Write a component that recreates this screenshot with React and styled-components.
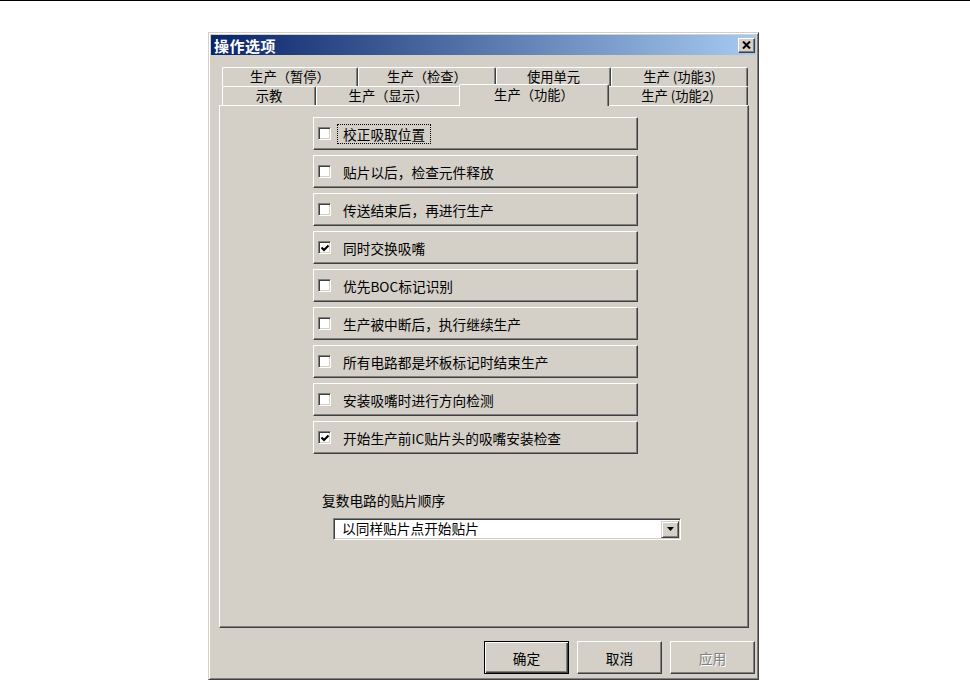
import styled, { createGlobalStyle } from 'styled-components';

const options = [
	{ label: '校正吸取位置', checked: false, focused: true },
	{ label: '贴片以后，检查元件释放', checked: false },
	{ label: '传送结束后，再进行生产', checked: false },
	{ label: '同时交换吸嘴', checked: true },
	{ label: '优先BOC标记识别', checked: false },
	{ label: '生产被中断后，执行继续生产', checked: false },
	{ label: '所有电路都是坏板标记时结束生产', checked: false },
	{ label: '安装吸嘴时进行方向检测', checked: false },
	{ label: '开始生产前IC贴片头的吸嘴安装检查', checked: true },
];

const backTabs = [
	{ label: '生产（暂停）', width: 136 },
	{ label: '生产（检查）', width: 138 },
	{ label: '使用单元', width: 115 },
	{ label: '生产 (功能3)', width: 137 },
];

const frontTabs = [
	{ label: '示教', width: 94 },
	{ label: '生产（显示）', width: 145 },
	{ label: '生产（功能）', width: 146, active: true },
	{ label: '生产 (功能2)', width: 141 },
];

const App = () => {
	return (
		<>
			<GlobalStyle />
			<TopRule />
			<Dialog>
				<TitleBar>
					<Title>操作选项</Title>
					<CloseButton>
						<svg width="9" height="8" viewBox="0 0 9 8">
							<path d="M1 0.5 L8 7.5 M8 0.5 L1 7.5" stroke="#000" strokeWidth="2" />
						</svg>
					</CloseButton>
				</TitleBar>

				<Content>
					<TabStrip>
						<TabRow>
							{backTabs.map((tab) => (
								<Tab key={tab.label} $width={tab.width}>
									{tab.label}
								</Tab>
							))}
						</TabRow>
						<TabRow>
							{frontTabs.map((tab) => (
								<Tab key={tab.label} $width={tab.width} $active={tab.active}>
									{tab.label}
								</Tab>
							))}
						</TabRow>
					</TabStrip>

					<Panel>
						<OptionList>
							{options.map((item) => (
								<OptionButton key={item.label}>
									<CheckBox>
										{item.checked && (
											<svg width="8" height="8" viewBox="0 0 8 8">
												<path d="M0.5 3.5 L3 6 L7.5 1.5" fill="none" stroke="#000" strokeWidth="2" />
											</svg>
										)}
									</CheckBox>
									<OptionLabel $focused={item.focused}>{item.label}</OptionLabel>
								</OptionButton>
							))}
						</OptionList>

						<OrderGroup>
							<GroupLabel>复数电路的贴片顺序</GroupLabel>
							<Select>
								<span>以同样贴片点开始贴片</span>
								<DropButton>
									<svg width="7" height="4" viewBox="0 0 7 4">
										<path d="M0 0 H7 L3.5 4 Z" fill="#000" />
									</svg>
								</DropButton>
							</Select>
						</OrderGroup>
					</Panel>
				</Content>

				<ButtonRow>
					<PushButton $default>确定</PushButton>
					<PushButton>取消</PushButton>
					<PushButton disabled>应用</PushButton>
				</ButtonRow>
			</Dialog>
		</>
	);
};

const GlobalStyle = createGlobalStyle`
	html, body {
		margin: 0;
		padding: 0;
		background: #ffffff;
	}

	body {
		font-family: "Noto Sans CJK SC", "Noto Sans", sans-serif;
		font-size: 13.5px;
		color: #000000;
	}
`;

const TopRule = styled.div`
	height: 1px;
	background: #000000;
`;

const Dialog = styled.div`
	box-sizing: border-box;
	width: 551px;
	height: 648px;
	margin: 31px 0 0 208px;
	padding: 2px;
	display: flex;
	flex-direction: column;
	background: #d4d0c8;
	border: 1px solid;
	border-color: #d4d0c8 #404040 #404040 #d4d0c8;
	box-shadow: inset 1px 1px #ffffff, inset -1px -1px #808080;
`;

const TitleBar = styled.div`
	height: 20px;
	flex: none;
	display: flex;
	align-items: center;
	justify-content: space-between;
	padding: 0 1px 0 3px;
	background: linear-gradient(to right, #0a246a, #a6caf0);
`;

const Title = styled.span`
	color: #ffffff;
	font-weight: 700;
	font-size: 15px;
	line-height: 1;
	letter-spacing: 0.5px;
`;

const CloseButton = styled.div`
	box-sizing: border-box;
	width: 17px;
	height: 15px;
	display: flex;
	align-items: center;
	justify-content: center;
	background: #d4d0c8;
	border: 1px solid;
	border-color: #ffffff #404040 #404040 #ffffff;
	box-shadow: inset -1px -1px #808080;
`;

const Content = styled.div`
	padding: 12px 7px 0 8px;
	display: flex;
	flex-direction: column;
`;

const TabStrip = styled.div`
	display: flex;
	flex-direction: column;
	padding: 0 1px 0 3px;
`;

const TabRow = styled.div`
	display: flex;
	height: 19px;
`;

const Tab = styled.div`
	box-sizing: border-box;
	flex: none;
	width: ${(p) => (p.$active ? p.$width + 4 : p.$width)}px;
	height: ${(p) => (p.$active ? '22px' : '100%')};
	margin: ${(p) => (p.$active ? '-2px -2px 0' : '0')};
	position: ${(p) => (p.$active ? 'relative' : 'static')};
	z-index: ${(p) => (p.$active ? 1 : 'auto')};
	display: flex;
	align-items: center;
	justify-content: center;
	padding-bottom: ${(p) => (p.$active ? '2px' : '0')};
	background: #d4d0c8;
	border-top: 1px solid #ffffff;
	border-left: 1px solid #ffffff;
	border-right: 1px solid #404040;
	border-radius: 2px 2px 0 0;
	box-shadow: inset -1px 0 #808080;
	font-size: 13.3px;
	line-height: 1;
	white-space: nowrap;
`;

const Panel = styled.div`
	box-sizing: border-box;
	height: 523px;
	padding: 11px 0 0 93px;
	border: 1px solid;
	border-color: #ffffff #404040 #404040 #ffffff;
	box-shadow: inset -1px -1px #808080;
`;

const OptionList = styled.div`
	display: flex;
	flex-direction: column;
	gap: 5px;
	width: 325px;
`;

const OptionButton = styled.div`
	box-sizing: border-box;
	height: 33px;
	display: flex;
	align-items: center;
	gap: 6px;
	padding-left: 4px;
	background: #d4d0c8;
	border: 1px solid;
	border-color: #ffffff #404040 #404040 #ffffff;
	box-shadow: inset -1px -1px #808080;
`;

const CheckBox = styled.span`
	box-sizing: border-box;
	flex: none;
	width: 13px;
	height: 13px;
	display: flex;
	align-items: center;
	justify-content: center;
	background: #ffffff;
	border: 1px solid;
	border-color: #808080 #ffffff #ffffff #808080;
	box-shadow: inset 1px 1px #404040, inset -1px -1px #d4d0c8;
`;

const OptionLabel = styled.span`
	padding: 1px 5px;
	border: 1px dotted ${(p) => (p.$focused ? '#000000' : 'transparent')};
	font-size: 13.7px;
	line-height: 16px;
	white-space: nowrap;
`;

const OrderGroup = styled.div`
	margin-top: 38px;
	display: flex;
	flex-direction: column;
`;

const GroupLabel = styled.div`
	padding-left: 9px;
	font-size: 13.7px;
	line-height: 16px;
`;

const Select = styled.div`
	box-sizing: border-box;
	width: 348px;
	height: 22px;
	margin: 10px 0 0 20px;
	padding: 0 1px 0 8px;
	display: flex;
	align-items: center;
	justify-content: space-between;
	background: #ffffff;
	border: 1px solid;
	border-color: #808080 #ffffff #ffffff #808080;
	box-shadow: inset 1px 1px #404040, inset -1px -1px #d4d0c8;
	font-size: 13.7px;
	line-height: 1;
`;

const DropButton = styled.span`
	box-sizing: border-box;
	width: 18px;
	height: 17px;
	display: flex;
	align-items: center;
	justify-content: center;
	background: #d4d0c8;
	border: 1px solid;
	border-color: #d4d0c8 #404040 #404040 #d4d0c8;
	box-shadow: inset 1px 1px #ffffff, inset -1px -1px #808080;
`;

const ButtonRow = styled.div`
	margin-top: 13px;
	padding-right: 1px;
	display: flex;
	justify-content: flex-end;
	gap: 8px;
`;

const PushButton = styled.button`
	box-sizing: border-box;
	width: 85px;
	height: 33px;
	padding: 0;
	font-family: inherit;
	font-size: 13.7px;
	color: ${(p) => (p.disabled ? '#808080' : '#000000')};
	text-shadow: ${(p) => (p.disabled ? '1px 1px #ffffff' : 'none')};
	background: #d4d0c8;
	border: 1px solid;
	border-color: ${(p) => (p.$default ? '#000000' : '#ffffff #404040 #404040 #ffffff')};
	box-shadow: ${(p) =>
		p.$default
			? 'inset 1px 1px #ffffff, inset -1px -1px #404040, inset -2px -2px #808080'
			: 'inset -1px -1px #808080'};
	border-radius: 0;
`;

export default App;
